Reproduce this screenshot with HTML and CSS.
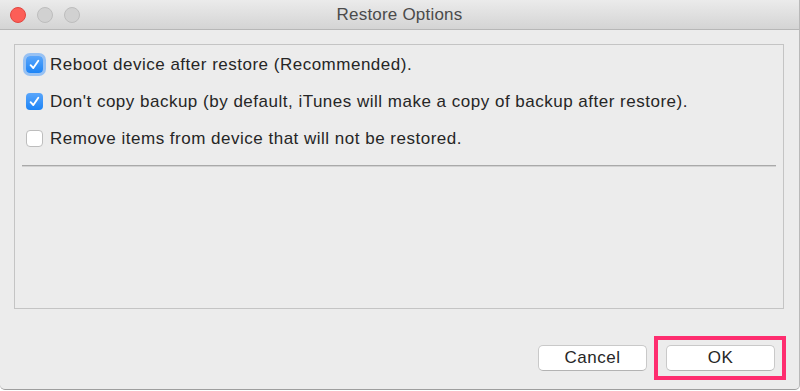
FILE: index.html
```html
<!DOCTYPE html>
<html>
<head>
<meta charset="utf-8">
<link rel="stylesheet" href="styles.css">
</head>
<body>
<div class="window">
  <div class="titlebar">
    <div class="lights">
      <span class="light red"></span>
      <span class="light gray"></span>
      <span class="light gray"></span>
    </div>
    <div class="title">Restore Options</div>
    <div class="spacer"></div>
  </div>
  <div class="content">
    <div class="panel">
      <div class="options">
        <label class="option">
          <span class="check on focus"><svg viewBox="0 0 17 17" width="17" height="17"><path d="M4.6 9.2 L7.3 12 L12.3 4.8" fill="none" stroke="#fff" stroke-width="1.9" stroke-linecap="round" stroke-linejoin="round"/></svg></span>
          <span class="text">Reboot device after restore (Recommended).</span>
        </label>
        <label class="option">
          <span class="check on"><svg viewBox="0 0 17 17" width="17" height="17"><path d="M4.6 9.2 L7.3 12 L12.3 4.8" fill="none" stroke="#fff" stroke-width="1.9" stroke-linecap="round" stroke-linejoin="round"/></svg></span>
          <span class="text">Don't copy backup (by default, iTunes will make a copy of backup after restore).</span>
        </label>
        <label class="option">
          <span class="check off"></span>
          <span class="text">Remove items from device that will not be restored.</span>
        </label>
      </div>
      <div class="separator"></div>
    </div>
    <div class="buttons">
      <button class="btn">Cancel</button>
      <div class="ok-wrap">
        <button class="btn">OK</button>
        <div class="highlight"></div>
      </div>
    </div>
  </div>
</div>
</body>
</html>
```

FILE: styles.css
```css
html, body {
  margin: 0;
  padding: 0;
  background: #ffffff;
}
body {
  font-family: "Liberation Sans", Arial, sans-serif;
  color: #262626;
}
.window {
  width: 800px;
  height: 390px;
  box-sizing: border-box;
  background: #ececec;
  border-right: 1px solid #b9b9b9;
  border-bottom: 1px solid #9e9e9e;
  border-radius: 0 0 5px 5px;
  display: flex;
  flex-direction: column;
  overflow: hidden;
}
.titlebar {
  height: 30px;
  box-sizing: border-box;
  border-bottom: 1px solid #b7b7b7;
  background: linear-gradient(#ebebeb, #d4d4d4);
  display: grid;
  grid-template-columns: 1fr auto 1fr;
  align-items: center;
}
.lights {
  display: flex;
  gap: 11px;
  padding-left: 10px;
}
.light {
  width: 16px;
  height: 16px;
  box-sizing: border-box;
  border-radius: 50%;
}
.light.red {
  background: #fc5e57;
  border: 1px solid #e2463f;
}
.light.gray {
  background: #d1d1d1;
  border: 1px solid #bdbdbd;
}
.title {
  font-size: 17px;
  letter-spacing: 0.2px;
  color: #4b4b4b;
}
.content {
  padding: 14px 15px 0 14px;
  display: flex;
  flex-direction: column;
}
.panel {
  height: 265px;
  box-sizing: border-box;
  border: 1px solid #c4c4c4;
  padding: 11px 7px 0 7px;
}
.options {
  display: flex;
  flex-direction: column;
  gap: 20px;
  padding-left: 4px;
}
.option {
  display: flex;
  align-items: center;
  gap: 7px;
  height: 17px;
  font-size: 17px;
  letter-spacing: 0.5px;
}
.check {
  width: 17px;
  height: 17px;
  box-sizing: border-box;
  border-radius: 4px;
  flex: none;
  display: flex;
}
.check.on {
  background: linear-gradient(#5aa6fb, #1c84f6);
}
.check.focus {
  box-shadow: 0 0 0 3px #97c1f3;
}
.check.off {
  background: #ffffff;
  border: 1px solid #bdbdbd;
}
.separator {
  margin-top: 18px;
  height: 1px;
  background: #a9a9a9;
  border-bottom: 1px solid #d2d2d2;
}
.buttons {
  display: flex;
  justify-content: flex-end;
  gap: 19px;
  margin-top: 36px;
  padding-right: 9px;
}
.btn {
  width: 109px;
  height: 26px;
  background: #ffffff;
  border: 1px solid #c9c9c9;
  border-bottom-color: #b3b3b3;
  border-radius: 5px;
  font-family: "Liberation Sans", Arial, sans-serif;
  font-size: 17px;
  letter-spacing: 0.5px;
  color: #262626;
  padding: 0;
}
.ok-wrap {
  position: relative;
  display: flex;
}
.highlight {
  position: absolute;
  left: -12px;
  right: -11px;
  top: -9px;
  bottom: -9px;
  border: 4px solid #fe2d6f;
}
```
